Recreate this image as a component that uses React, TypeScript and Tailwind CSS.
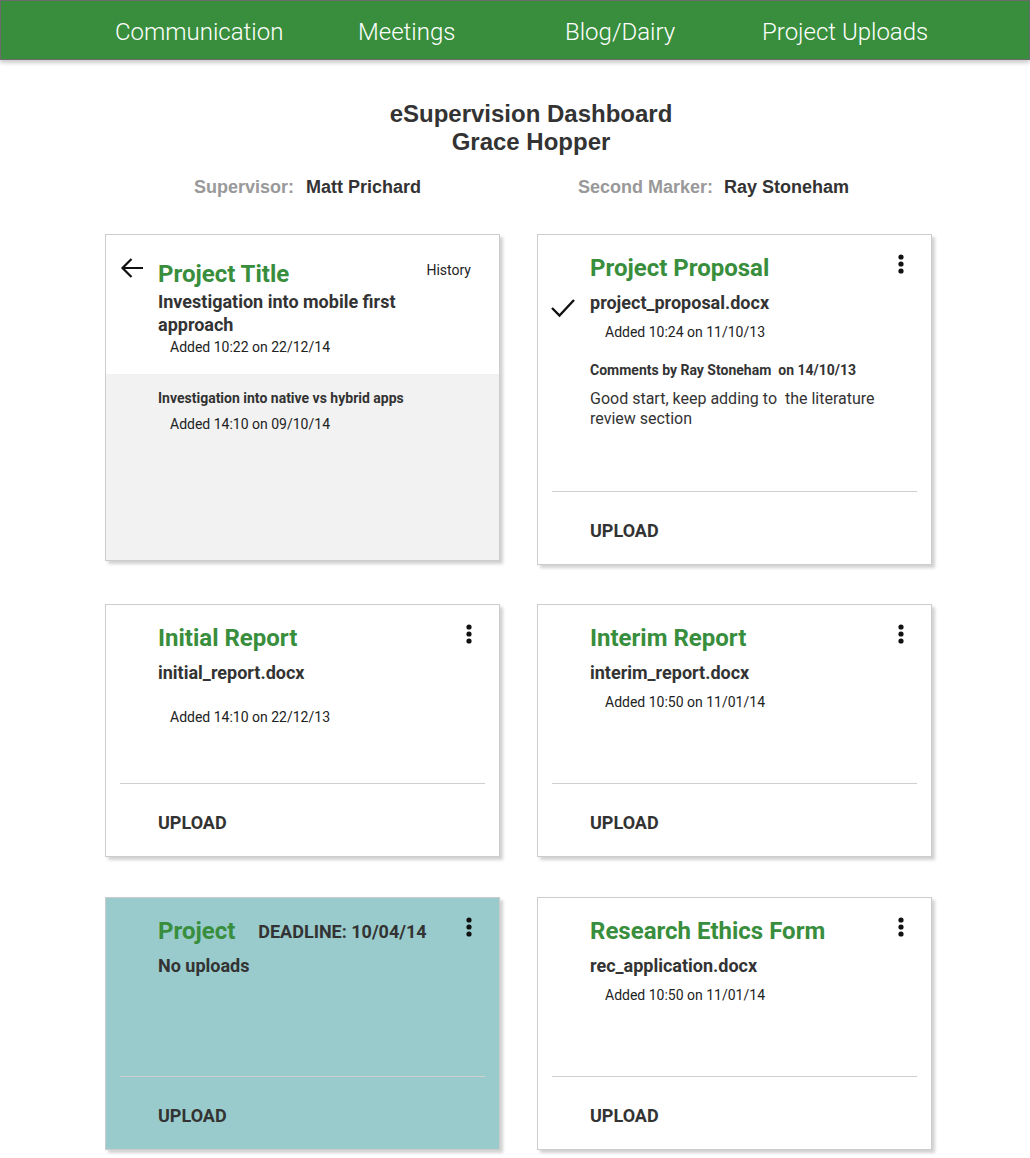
import React from 'react';

const roboto = { fontFamily: 'Roboto, "Noto Sans", sans-serif' };

function Dots() {
    return (
        <svg className="absolute top-[19px] right-[27px]" width="6" height="20" viewBox="0 0 6 20">
            <circle cx="3" cy="3" r="2.6" fill="#111" />
            <circle cx="3" cy="10" r="2.6" fill="#111" />
            <circle cx="3" cy="17" r="2.6" fill="#111" />
        </svg>
    );
}

function Footer() {
    return (
        <div className="mx-[14px] border-t border-[#cfcfcf] h-[73px] flex items-center">
            <span className="pl-[38px] pt-[4px] text-[18px] font-bold text-[#333]">UPLOAD</span>
        </div>
    );
}

function Card({ bg = 'bg-white', bodyH, children }: { bg?: string; bodyH: string; children: React.ReactNode }) {
    return (
        <div className={`relative ${bg} border border-[#cccccc] shadow-[3px_3px_3px_rgba(0,0,0,0.18)] flex flex-col`} style={roboto}>
            <div className={`${bodyH} pl-[52px] pt-[19px]`}>{children}</div>
            <Dots />
            <Footer />
        </div>
    );
}

function Title({ children }: { children: React.ReactNode }) {
    return <div className="text-[24px] leading-[28px] font-bold text-[#388e3c]">{children}</div>;
}

function FileName({ children }: { children: React.ReactNode }) {
    return <div className="mt-[10px] text-[18px] leading-[22px] font-bold text-[#333]">{children}</div>;
}

function Added({ children, className = '' }: { children: React.ReactNode; className?: string }) {
    return <div className={`text-[14px] leading-[18px] text-[#222] ${className}`}>{children}</div>;
}

export default function App() {
    const navItems = [
        { label: 'Communication', w: 'w-[243px]' },
        { label: 'Meetings', w: 'w-[207px]' },
        { label: 'Blog/Dairy', w: 'w-[197px]' },
        { label: 'Project Uploads', w: 'w-[200px]' },
    ];

    return (
        <div className="min-h-[1158px] bg-white pb-[8px]">
            {/* top nav */}
            <nav
                className="h-[60px] bg-[#388e3c] border border-[#6b6b6b] shadow-[0_3px_4px_rgba(0,0,0,0.2)] flex items-center pl-[114px]"
                style={roboto}
            >
                {navItems.map((item) => (
                    <div key={item.label} className={`${item.w} text-white text-[24px] font-light leading-[30px] pt-[3px]`}>
                        {item.label}
                    </div>
                ))}
            </nav>

            {/* heading */}
            <div className="text-center text-[24px] leading-[28px] font-bold text-[#333] mt-[40px] pl-[32px]" style={{ fontFamily: '"Liberation Sans", Arial, sans-serif' }}>
                <div>eSupervision Dashboard</div>
                <div>Grace Hopper</div>
            </div>

            <div className="flex mt-[20px] pl-[194px] text-[18px] leading-[22px] font-bold" style={{ fontFamily: '"Liberation Sans", Arial, sans-serif' }}>
                <div className="w-[384px] flex">
                    <span className="text-[#999]">Supervisor:</span>
                    <span className="ml-[12px] text-[#333]">Matt Prichard</span>
                </div>
                <div className="flex">
                    <span className="text-[#999]">Second Marker:</span>
                    <span className="ml-[11px] text-[#333]">Ray Stoneham</span>
                </div>
            </div>

            {/* cards */}
            <div className="ml-[105px] w-[827px] mt-[36px] grid grid-cols-[395px_395px] gap-x-[37px]">
                {/* project title card */}
                <div className="h-[327px] bg-[#f2f2f2] border border-[#cccccc] shadow-[3px_3px_3px_rgba(0,0,0,0.18)] flex flex-col" style={roboto}>
                    <div className="h-[139px] bg-white relative pl-[52px] pt-[25px]">
                        <svg className="absolute left-[14px] top-[22px]" width="24" height="22" viewBox="0 0 24 22">
                            <path d="M23 11H2.5M11.5 2L2.5 11l9 9" stroke="#111" strokeWidth="2.2" fill="none" />
                        </svg>
                        <div className="absolute right-[28px] top-[26px] text-[14px] leading-[18px] text-[#222]">History</div>
                        <Title>Project Title</Title>
                        <div className="mt-[2px] w-[280px] text-[18px] leading-[23px] font-bold text-[#333]">
                            Investigation into mobile first approach
                        </div>
                        <Added className="pl-[12px] mt-[2px]">Added 10:22 on 22/12/14</Added>
                    </div>
                    <div className="pl-[52px] pt-[15px]">
                        <div className="text-[14px] leading-[18px] font-bold text-[#333]">Investigation into native vs hybrid apps</div>
                        <Added className="pl-[12px] mt-[8px]">Added 14:10 on 09/10/14</Added>
                    </div>
                </div>

                {/* project proposal */}
                <div className="h-[327px]">
                    <Card bodyH="h-[256px]">
                        <Title>Project Proposal</Title>
                        <div className="relative">
                            <svg className="absolute left-[-40px] top-[6px]" width="26" height="20" viewBox="0 0 26 20">
                                <path d="M2 10l7.5 7.5L24 2" stroke="#111" strokeWidth="2.4" fill="none" />
                            </svg>
                            <FileName>project_proposal.docx</FileName>
                        </div>
                        <Added className="pl-[15px] mt-[9px]">Added 10:24 on 11/10/13</Added>
                        <div className="mt-[20px] text-[14px] leading-[18px] font-bold text-[#333] whitespace-pre">
                            {'Comments by Ray Stoneham  on 14/10/13'}
                        </div>
                        <div className="mt-[10px] w-[300px] text-[16px] leading-[20px] text-[#333] whitespace-pre-wrap">
                            {'Good start, keep adding to  the literature review section'}
                        </div>
                    </Card>
                </div>

                {/* initial report */}
                <div className="mt-[43px] h-[253px]">
                    <Card bodyH="h-[178px]">
                        <Title>Initial Report</Title>
                        <FileName>initial_report.docx</FileName>
                        <Added className="pl-[12px] mt-[24px]">Added 14:10 on 22/12/13</Added>
                    </Card>
                </div>

                {/* interim report */}
                <div className="mt-[43px] h-[253px]">
                    <Card bodyH="h-[178px]">
                        <Title>Interim Report</Title>
                        <FileName>interim_report.docx</FileName>
                        <Added className="pl-[15px] mt-[9px]">Added 10:50 on 11/01/14</Added>
                    </Card>
                </div>

                {/* project deadline */}
                <div className="mt-[40px] h-[253px]">
                    <Card bg="bg-[#99cbcc]" bodyH="h-[178px]">
                        <div className="flex items-center">
                            <Title>Project</Title>
                            <span className="ml-[23px] text-[18px] font-bold text-[#333]">DEADLINE: 10/04/14</span>
                        </div>
                        <FileName>No uploads</FileName>
                    </Card>
                </div>

                {/* ethics form */}
                <div className="mt-[40px] h-[253px]">
                    <Card bodyH="h-[178px]">
                        <Title>Research Ethics Form</Title>
                        <FileName>rec_application.docx</FileName>
                        <Added className="pl-[15px] mt-[9px]">Added 10:50 on 11/01/14</Added>
                    </Card>
                </div>
            </div>
        </div>
    );
}
